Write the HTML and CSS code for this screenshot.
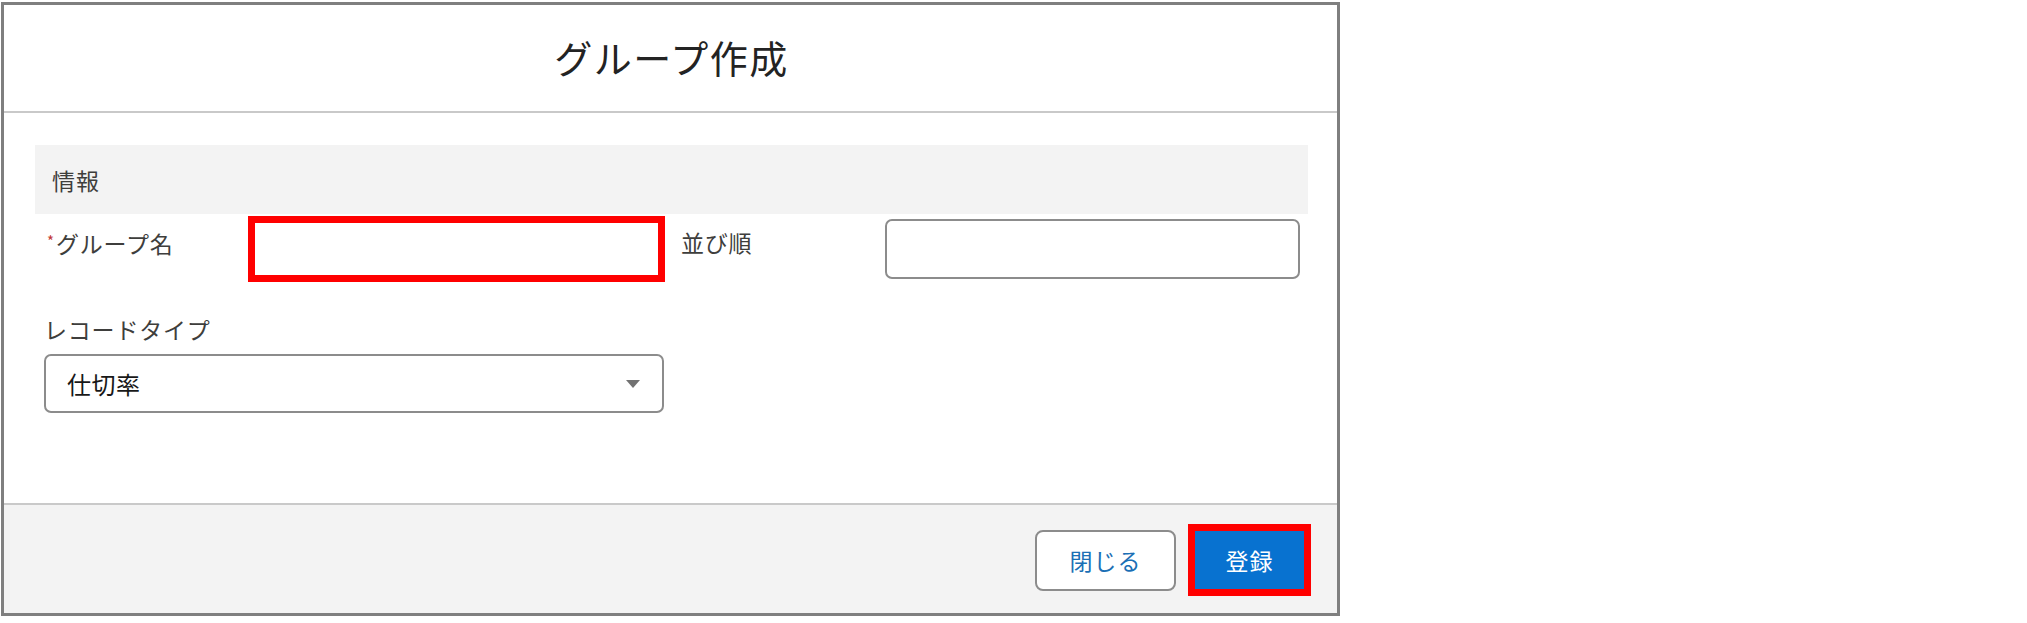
FILE: index.html
```html
<!DOCTYPE html>
<html lang="ja">
<head>
<meta charset="utf-8">
<title>グループ作成</title>
<link rel="stylesheet" href="styles.css">
</head>
<body>
<div class="modal">
  <header class="modal-header">
    <h1 class="title">グループ作成</h1>
  </header>
  <main class="modal-body">
    <div class="section-band"><span class="section-title">情報</span></div>
    <div class="row row-first">
      <div class="field">
        <label class="label label-side"><span class="req">*</span>グループ名</label>
        <div class="input input-highlight"></div>
      </div>
      <div class="field field-right">
        <label class="label label-side">並び順</label>
        <div class="input input-plain"></div>
      </div>
    </div>
    <div class="row row-second">
      <div class="field-stack">
        <label class="label">レコードタイプ</label>
        <div class="select">
          <span class="select-value">仕切率</span>
          <svg class="select-arrow" width="16" height="10" viewBox="0 0 16 10"><path d="M1 1 L15 1 L8 9 Z" fill="#727272"/></svg>
        </div>
      </div>
    </div>
  </main>
  <footer class="modal-footer">
    <button class="btn btn-neutral">閉じる</button>
    <div class="btn-highlight"><button class="btn btn-brand">登録</button></div>
  </footer>
</div>
</body>
</html>
```

FILE: styles.css
```css
html, body {
  margin: 0;
  padding: 0;
  background: #ffffff;
}
body {
  font-family: "Noto Sans CJK JP", "Noto Sans", sans-serif;
  color: #3e3e3c;
}
.modal {
  margin: 2px 0 0 1px;
  width: 1339px;
  height: 614px;
  box-sizing: border-box;
  border: 3px solid #7f7f7f;
  display: flex;
  flex-direction: column;
  background: #ffffff;
}
.modal-header {
  height: 108px;
  border-bottom: 2px solid #c9c9c9;
  display: flex;
  align-items: center;
  justify-content: center;
  box-sizing: border-box;
  padding-bottom: 4px;
  padding-left: 2px;
}
.title {
  margin: 0;
  font-size: 38px;
  font-weight: 400;
  color: #232323;
  letter-spacing: 1.5px;
}
.modal-body {
  flex: 1;
  padding: 32px 29px 0 31px;
}
.section-band {
  height: 69px;
  background: #f3f3f3;
  display: flex;
  align-items: center;
  padding-left: 17px;
}
.section-title {
  font-size: 23px;
  letter-spacing: 1px;
  color: #3e3e3c;
}
.row {
  display: flex;
  padding-left: 10px;
}
.row-first {
  margin-top: 2px;
}
.row-second {
  margin-top: 32px;
}
.field {
  display: flex;
  align-items: flex-start;
}
.field-right {
  margin-left: 16px;
}
.label {
  font-size: 23px;
  line-height: 30px;
  letter-spacing: 0.8px;
  color: #3e3e3c;
  display: block;
}
.label-side {
  width: 203px;
  padding-top: 10px;
  padding-left: 2px;
  box-sizing: border-box;
}
.field-right .label-side {
  width: 204px;
  padding-top: 11px;
  padding-left: 0;
}
.req {
  color: #c23934;
  font-size: 15px;
  vertical-align: 6px;
  margin-right: 2px;
  letter-spacing: 0;
}
.input {
  box-sizing: border-box;
  background: #ffffff;
}
.input-highlight {
  width: 417px;
  height: 66px;
  border: 7px solid #ff0000;
}
.input-plain {
  width: 415px;
  height: 60px;
  margin-top: 3px;
  border: 2px solid #8c8c8c;
  border-radius: 7px;
}
.field-stack {
  display: flex;
  flex-direction: column;
  margin-left: -1px;
}
.select {
  margin-top: 10px;
  width: 620px;
  height: 59px;
  box-sizing: border-box;
  border: 2px solid #8c8c8c;
  border-radius: 7px;
  display: flex;
  align-items: center;
  justify-content: space-between;
  padding: 0 21px 0 21px;
}
.select-value {
  font-size: 24px;
  letter-spacing: 0.5px;
  color: #181818;
}
.select-arrow {
  display: block;
}
.modal-footer {
  height: 110px;
  background: #f3f3f3;
  border-top: 2px solid #c9c9c9;
  box-sizing: border-box;
  display: flex;
  align-items: center;
  justify-content: flex-end;
  padding-right: 26px;
  padding-top: 2px;
}
.btn {
  font-family: "Noto Sans CJK JP", "Noto Sans", sans-serif;
  font-size: 23px;
  cursor: pointer;
  box-sizing: border-box;
  letter-spacing: 1px;
}
.btn-neutral {
  width: 141px;
  height: 61px;
  background: #ffffff;
  border: 2px solid #8c8c8c;
  border-radius: 8px;
  color: #1b6fb5;
}
.btn-highlight {
  margin-left: 12px;
  width: 123px;
  height: 72px;
  box-sizing: border-box;
  border: 7px solid #ff0000;
  display: flex;
}
.btn-brand {
  flex: 1;
  border: none;
  background: #0872d0;
  color: #ffffff;
  margin: 0;
}
```
